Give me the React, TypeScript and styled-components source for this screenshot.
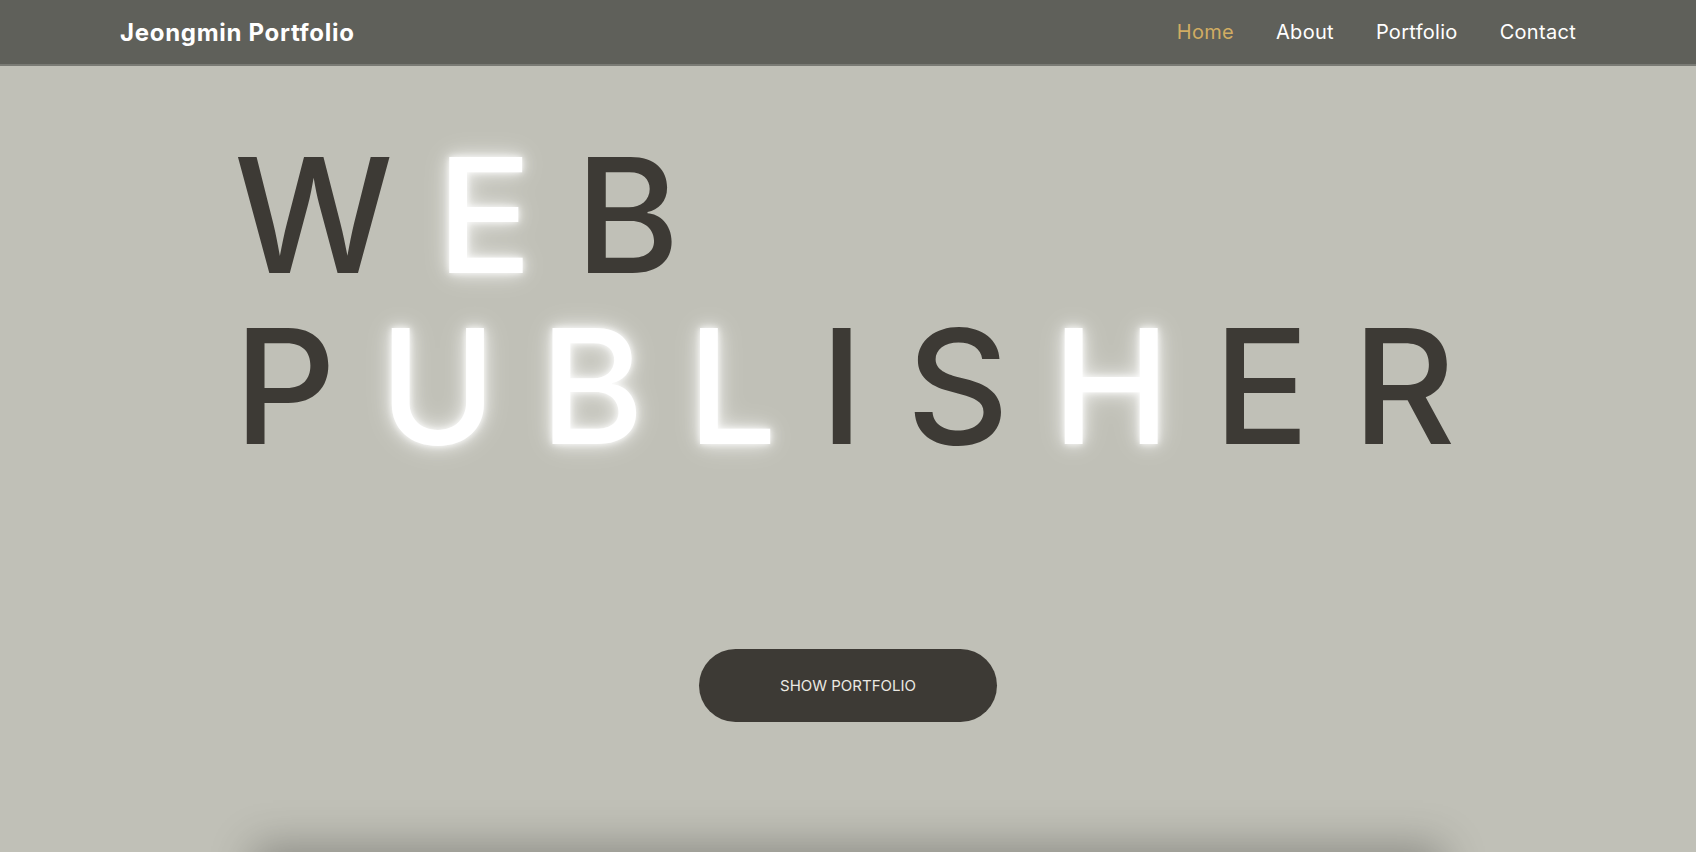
import React from "react";
import styled, { createGlobalStyle, css } from "styled-components";

const GlobalStyle = createGlobalStyle`
  html, body {
    margin: 0;
    padding: 0;
    background-color: #c0c0b7;
  }
  body {
    font-family: Inter, "Noto Sans", sans-serif;
  }
  * {
    box-sizing: border-box;
  }
`;

// Header
const Header = styled.header`
  height: 66px;
  background-color: #5f605a;
  border-bottom: 2px solid #7a7b75;
  display: flex;
  align-items: center;
  justify-content: space-between;
  padding: 0 120px;
`;
const Logo = styled.a`
  color: #fff;
  font-size: 24px;
  font-weight: 700;
  letter-spacing: 0.7px;
  text-decoration: none;
`;
const Nav = styled.nav`
  display: flex;
  gap: 42px;
`;
const NavLink = styled.a<{ $active?: boolean }>`
  color: ${({ $active }) => ($active ? "#d1ac62" : "#fff")};
  font-size: 20px;
  font-weight: 400;
  letter-spacing: 0.3px;
  text-decoration: none;
  cursor: pointer;

  &:hover {
    color: #d1ac62;
  }
`;

// Hero
const Hero = styled.section`
  min-height: calc(100vh - 66px);
  display: flex;
  flex-direction: column;
  align-items: center;
`;
const Title = styled.h1`
  width: 1228px;
  margin: 64px 0 0;
  color: #3d3a35;
  font-size: 159px;
  font-weight: 500;
  line-height: 171px;
  letter-spacing: 43px;
`;
const Line = styled.span`
  display: block;
  white-space: nowrap;
`;
const Letter = styled.span<{ $glow?: boolean }>`
  ${({ $glow }) =>
    $glow &&
    css`
      color: #fff;
      text-shadow: 0 0 6px rgba(255, 255, 255, 0.9),
        0 0 16px rgba(255, 255, 255, 0.75), 0 0 28px rgba(255, 255, 255, 0.5);
    `}
`;
const ShowButton = styled.button`
  margin-top: 177px;
  width: 298px;
  height: 73px;
  border: none;
  border-radius: 37px;
  background-color: #3d3a35;
  color: #ebe9e2;
  font-family: Inter, "Noto Sans", sans-serif;
  font-size: 15px;
  font-weight: 400;
  cursor: pointer;
`;

// next section peeking under the fold
const NextSection = styled.section`
  width: 1190px;
  height: 400px;
  margin: 0 auto;
  background-color: #c0c0b7;
  box-shadow: 0 -6px 40px rgba(0, 0, 0, 0.28);
`;

const lines = [
  { text: "WEB", glow: [1] },
  { text: "PUBLISHER", glow: [1, 2, 3, 6] }
];

function App(): JSX.Element {
  return (
    <>
      <GlobalStyle />
      <Header>
        <Logo href="#">Jeongmin Portfolio</Logo>
        <Nav>
          <NavLink $active>Home</NavLink>
          <NavLink>About</NavLink>
          <NavLink>Portfolio</NavLink>
          <NavLink>Contact</NavLink>
        </Nav>
      </Header>
      <Hero>
        <Title>
          {lines.map(line => (
            <Line key={line.text}>
              {line.text.split("").map((ch, i) => (
                <Letter key={i} $glow={line.glow.includes(i)}>
                  {ch}
                </Letter>
              ))}
            </Line>
          ))}
        </Title>
        <ShowButton>SHOW PORTFOLIO</ShowButton>
      </Hero>
      <NextSection />
    </>
  );
}

export default App;
